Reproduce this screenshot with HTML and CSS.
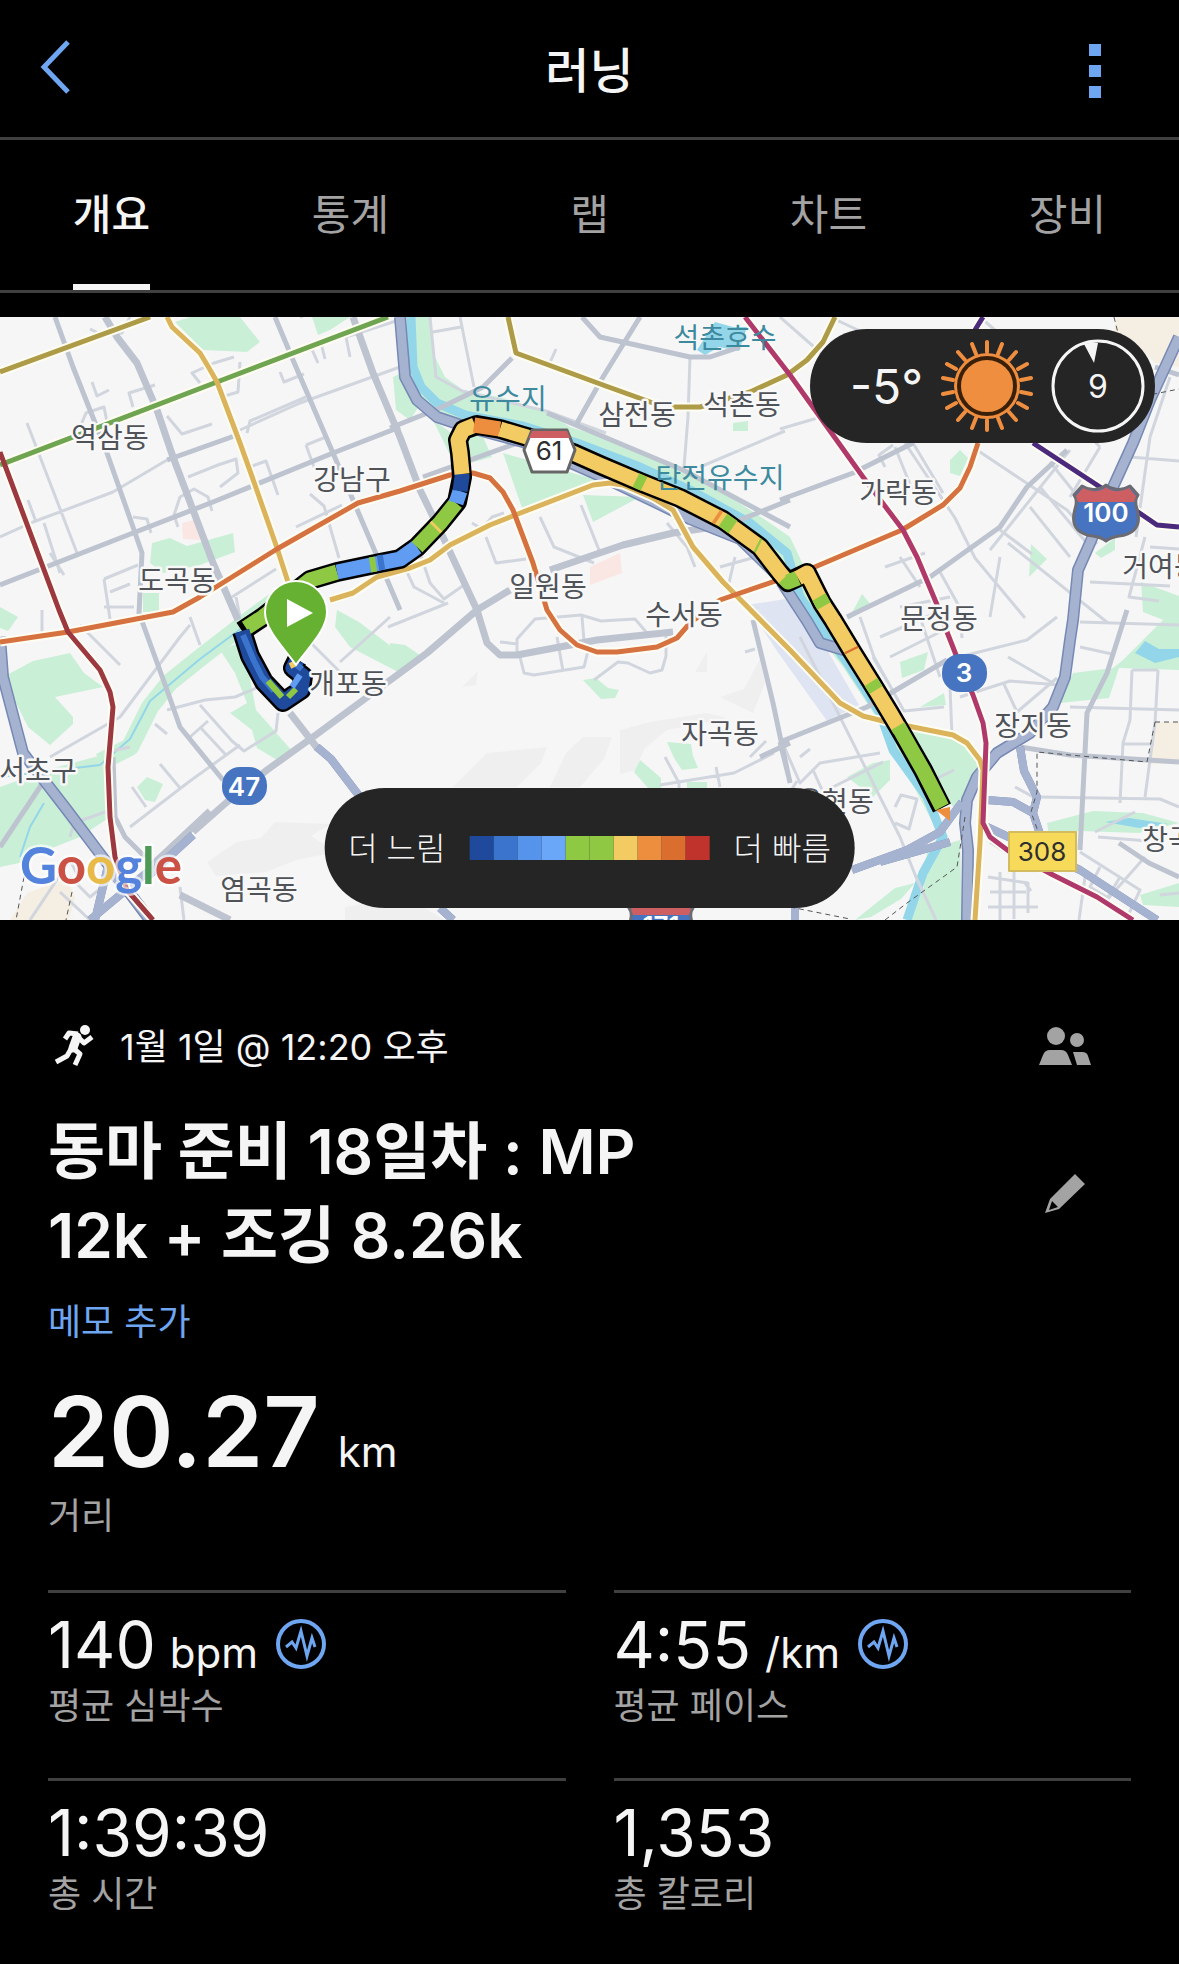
FILE: index.html
```html
<!DOCTYPE html>
<html lang="ko">
<head>
  <meta charset="utf-8">
  <meta name="viewport" content="width=device-width,initial-scale=1">
  <title>러닝</title>
  <link rel="stylesheet" href="styles.css">
</head>
<body>

<header class="topbar">
  <button class="icon-btn" type="button" aria-label="뒤로">
    <svg width="32" height="54" viewBox="0 0 32 54"><path class="chevron" d="M28 2 4 27l24 25"/></svg>
  </button>
  <div class="topbar-title">러닝</div>
  <button class="icon-btn more" type="button" aria-label="더 보기">
    <svg width="12" height="54" viewBox="0 0 12 54"><path d="M0 0h12v12H0zM0 21h12v12H0zM0 42h12v12H0z"/></svg>
  </button>
</header>

<nav class="tabs">
  <div class="tabs-row">
    <button class="tab active" type="button">개요</button>
    <button class="tab" type="button">통계</button>
    <button class="tab" type="button">랩</button>
    <button class="tab" type="button">차트</button>
    <button class="tab" type="button">장비</button>
  </div>
</nav>

<!-- ───────── Map ───────── -->
<section class="map">
  <svg class="map-canvas" viewBox="0 0 1179 603" role="img" aria-label="러닝 경로 지도">
    <rect class="land" width="1179" height="603"/>

    <!-- terrain shading -->
    <g class="terrain">
      <path d="M453 470 487 436l60-6-6 16-24 24zM550 470l16-34 17-16 29 0-8 22-24 28zM620 413l30-8 57-9 20 5-60 12-22 18-10 22-15 4zM720 380l24-8 16-30 5 24-12 30z"/>
      <path d="M207 545l30-20 24-4 14-16 56 2-20 12 25 16-40 8-30 12-50 4zM695 355l12-20v20zM345 590l60-10 40 23H345zM462 370l16-16-2 14z"/>
    </g>

    <!-- parks -->
    <g class="park">
      <path d="M175 5 190 0h50l20 25-13 10-44-2zM312 0h38l-20 13-12 5zM152 226l18-5 17 8 46-13 2 19-35 13-37 8-13-10zM143 276h16v19h-16z"/>
      <path d="M3 360l30-16 37-8 14 20 19 14-48 10 18 20v7l-23 21-22-18zM0 470l50-18 60-16v64l-30 20-38 15-18 10-24 5zM0 290l18 10-10 14-8-3z"/>
      <path d="M137 470l10-10 16 7-8 18-10-2zM230 396l17-10-12-30-15-23 16-6 14 34 6 32 16 18 21 24-16 8-20-12-5-18zM337 293l22 12 41 31v20l-50-26-15-20zM390 326l15 2 15 10-20 18-10-6z"/>
      <path d="M503 136l94 27-75 28zM583 178l57 2-47 25zM433 103l20 14 30 3 9 20-22 6-20-8zM393 60l20-10 10 33-13 20-14-10zM733 106l15-2v10h-15zM848 303l24-14-10-12zM950 143l10-10 8 8-8 18-10-3zM1031 227l16 15-18 18zM1095 236l20-15v12l-14 8zM1141 265l38 14v30l-36-14z"/>
      <path d="M583 363l13-2 12 10 11 2-4 8-14 1zM667 425l24 2 2 12 5 12-16 2-8-12zM634 455l6-12 21 18v10l-12 1zM687 465h20v6h-20z"/>
      <path d="M910 413l40 8 20 12 12 14-10 30-19 13-20-32zM847 460l26-14 17-3v20l-17 17zM927 533l33-10 2 80h-52l14-34zM900 345l28-10-4 18-22 8zM1060 386l13-30 40-5 10-8 50-50h6v60l-60-2-10 30z"/>
      <path d="M1047 506l46-12 50 2 36 10-40 10-60-2-30 4zM1140 578l39-12v24l-36-2zM855 603l40-32 20-5-14 16-30 18zM920 390l24-14 2 12z"/>
      <path d="M405 0h25l5 40 10 20 18 13 40 8 44 14 23 15 53 16 60 30 47 24 40 26 20 14 17 36 90 140 50 84-14 26-53-100-37-56-53-67-10-27-40-36-50-20-83-40-84-40-56-12-30-10-20-17-12-23z"/>
    </g>
    <path class="park-band" d="M100 445 130 430l20-40 20-25 30-24 45-35 30-22"/>
    <path class="campus" d="M182 206l12-3 6 20-17-1zM590 250l30-14 2 20-32 12zM943 183l14-16 3 10-13 13z"/>
    <path class="rail-yard" d="M747 288l38-6 30 30 44 76-32 16-50-70z"/>
    <path class="sand" d="M1117 0h62v50l-24-4-20-20-24-2zM1157 405h22v42h-31zM27 576l40-15 8 20-6 22H10z"/>
    <path class="lake" d="M697 33 715 5l18 5 14 0-8 24-20-4-14 8zM1135 336l10-12 14 8h20v8l-24 6zM1105 505l24-4 40 6-30 4z"/>

    <!-- Tancheon and streams -->
    <path class="river" d="M411 0l2 50 8 20 16 16 28 12 58 11 54 17 63 24 50 23 60 33 37 30 13 44 50 70 30 46 13 37 34 47 16 40-20 36-16 47"/>
    <path class="stream" d="M0 460l100-12 30-26 20-38 50-42 46-34M20 540l10-30 14-24"/>

    <!-- minor streets -->
    <g class="street">
      <path d="M27 106 77 236M33 205l80-30 54-32M0 220l33-15M240 113l60-27 100-36M247 116l3-12 56-24M92 65l5 14 12-6M90 12l12 6 20-2 8-16M133 90l-4-14 26-8M200 66l-8 -10 22-10 20 -6M167 99l15 18 30-10M240 45l-2 30-20 6M280 55l4 10 20-8M350 40l-4-20 50-16M310 28l8 18M320 22l5 20"/>
      <path d="M188 160l30-12 18-6 2 14-18 14M252 149l14-5 12 34M306 128l20-8M306 128l8 22M80 110l6-14 18-6 4 20M178 210l-4-12 6-18 14-8 14 8 4 14M133 200l14 2 4 14M104 262l34-14M104 262l6 40M110 275l20-8M104 290l30 0M50 236l14 22M296 210l46-22M310 177l14 12 15 52M28 183l8 22M44 206l16 50M232 280l44-28M240 300l-4-20"/>
      <path d="M50 440l70-40 60-80 10-12M167 393l38-10 30-3 40-17M200 388l32 36 12 10 32-20 2-18M190 420l18-16M200 410l26 28M130 510l60-46 50-36M132 470l14 20M160 447l20 24M155 407l12 10M42 293v30M190 300l10 28M310 325l30 30 20 14M340 345l50-45M80 308l40 40M300 0l100-40"/>
      <path d="M430 0l6 60 26 14 84 20 60 22M433 15l28-5M460 0l14 70M548 50l8-18M690 40l-2 60-4 50M700 150l85-36M540 200l14 30 40 16M581 188l20 50M534 245l8 16M472 206l10 6 10-12 12-4M486 220l10 26 30 -4M420 236l10 30 14 16 20-14M400 240l14 30 30 16M388 310l60-24"/>
      <path d="M517 338v-16l18-20 46-4 20 6 34-2 12 14 M500 325l18 2M557 320l6 34M582 300l2 24M520 340l4 16 10 2 50-8 4-16M594 363l24-18 10 1 22 10 12-3 4-14v-22M665 440l14 26v12M660 468l74-12 40-20M716 450l4 20M750 440l16-16 M667 206l20 24 8 20M720 250l50-14 8 24M735 240l-6 26M745 335l10-3"/>
      <path d="M780 0l50 44M830 0l30 14M885 150l-6-12 14-10M780 112l34-10 16-6M895 130l24 60M905 126l50 75 20 40 50 60M977 133l90 60 30 34M913 126l30 50M885 250l40-14 M900 240l20 30M980 0l16 14M940 255l20 36 2 30M1000 240l-10 60M1040 170l50 60M1030 190l40 50M1000 213l32 24M1050 145l24 30M1008 226l100 80M1070 133l-80 100"/>
      <path d="M1170 60l-20 60-14 100M1130 140l49 4M1060 90l40 40M1090 265l80 4M1080 305l99 3M1070 390l109 3M1040 480l120 2 19 8M1080 330l32 7M1150 230l29 2M1145 220l-16 60 30 4M1132 353l-2 50-7 23-3 60M1158 353l-3 53-10 74M1132 353h26M1124 427h30M1098 520l50 4M1095 515l40-20M1080 535l60 38-14 30M1100 550l-10 20 20 12M1120 560l-12 20M1145 540l-40 45M1160 578l19-2M1085 560l-6 43M990 525l30 20M988 560l40 6v30M990 575h36M988 590h50M1000 555v48M1014 552v50M1025 566l6 8"/>
      <path d="M860 300l14 40 30 54 40 -4M880 320l60-26M900 290l50-10M890 340l50-25M947 343l80-20 30-23M960 380l50-16 50 4M1003 365l14 30 40-34M1008 340l45 26M920 300l20 60M950 370l2 50M800 320l100 200 16 40 20 43M780 420l20 46 20-20 60-10M800 440l10-8M813 453l10 22 60-30M787 480l10-16M895 490l6-12 16 4-8 30-14-6M930 465l24-12M1015 470l22 12M873 340l14 24M1070 180l30-50"/>
      <path d="M30 603l40-60 10 20M70 560l20 20 20-16M60 575l30 28M180 570l4 33M130 430l-18 4M70 520l4-14 34-12"/>
    </g>

    <!-- main roads -->
    <g class="road">
      <path d="M55 0l18 50 34 86 26 74 9 26-3 60 28 77 13 37 43 53M0 268l133-52 80-31 120-49 67-26M275 0l18 43 40 93 20 47 27 63 20 47M640 0l-37 60-26 46M582 0l18 20 90 20 20 0 30-10M390 111l50-20 43-21 29-29M423 160l100-36M547 96l136 57 107 57M790 183l-60 24M167 143l73-26"/>
      <path d="M780 183l73-27 60-30M847 300l83-40 70-50 27-40 40-37M780 425l87-35 80-47M1127 293l-20 63-20 40-7 137M1020 430l50 8 109 7M753 303l20 83 17 80M760 440l30-14M780 425l10 40M0 530l40-60 6-14M0 320l4 12M1179 560l-30-14-30-20M113 440l2 60 10 20 20 20M388 0v-4M1155 50l24 8"/>
    </g>
    <g class="road wide">
      <path d="M105 0l12 20 20 26 20 47 16 47 20 53 20 53 25 57M353 0l20 56 27 64 20 53 23 47 34 73 10 33 13 12 17 0 80-15 76-8M193 515l34-30 40-32 46-33 87-64 27-20 50-43 33-20M550 253l73-25 50-12 40-6M150 550l60-56M180 578l50 25M290 396l28 36"/>
    </g>

    <!-- expressways, drawn as edge then fill -->
    <g class="hwy-edge">
      <path id="hwy-main" d="M1179 20l-29 63-17 43-20 44-23 56-12 27-5 50-3 20-5 37-12 30-23 26-33 20-20 24-10 23-2 23 3 27-1 70"/>
      <path id="hwy-west" d="M0 320l3 40 20 76 44 57 40 53 43 57"/>
      <path id="hwy-river" d="M400 0l5 60 12 23 20 17 30 10 56 15 84 37 83 40 50 20 37 36 30 46 13 22 27 8"/>
      <path id="hwy-ramps" d="M852 553l55-20 33-18 22-30M880 545l70-20M1020 430l4 24 13 26-4 16-20-11-26-2M1033 496l10 30M987 510l93 43 77 50M147 560l46-42M317 430l14 12 29 38M440 591l13 12M795 590v13M95 603l12-50 30 30M90 603l60-50"/>
    </g>
    <g class="hwy-fill">
      <use href="#hwy-main"/><use href="#hwy-west"/><use href="#hwy-river"/><use href="#hwy-ramps"/>
    </g>
    <path class="boundary" d="M1155 405h24M1155 405l-8 40-110-10v40l-6 20 8 22M965 500l-8 50-50 36-22 17M790 590l60 12M24 560l-8 43M72 575l-6 28M1114 0l10 40 25 38 30-6"/>

    <!-- subway lines -->
    <g class="rail-case">
      <path id="line-olive" d="M0 55 150 0M508 0l8 36 87 32 50 18 20 4h27l50-15 37-17 20-15 16-18 12-25"/>
      <path id="line-green" d="M0 148 217 65 388 0"/>
      <path id="line-gold" d="M167 0l5 10 28 26 9 15 8 14 23 61 15 42 22 63 11 34M330 283l23-7 24-16 33-9 20-8 20-15 40-20 33-13 70-27 17-2 13 2 30 13 20 12 20 37 30 35 67 68 50 53 23 13 24 6 26 5 40 8 14 8 13 17 3 10-3 73-5 77"/>
      <path id="line-orange" d="M0 325l68-10 105-20 27-15 77-48 81-46 42-12 50-16 23-2 17 5 13 14 10 18 20 53 14 47 13 20 17 15 20 7h20l40-5 20-9 13-15 30-23 90-31 92-39 41-25 17-17 10-21 8-24"/>
      <path id="line-red" d="M0 135l59 158 9 22 32 38 10 22 3 15-5 60 2 50 5 40 12 33 26 30"/>
      <path id="line-magenta" d="M745 0l45 58 73 102 40 53 14 27 21 50 9 25 13 33 13 30 10 28 3 20-3 80 7 14 20 15 43 23 44 22 36 23"/>
      <path id="line-purple" d="M983 0l-8 13M1033 126l67 44 38 25 19 13 22 2"/>
    </g>
    <use class="rail olive" href="#line-olive"/>
    <use class="rail green" href="#line-green"/>
    <use class="rail gold" href="#line-gold"/>
    <use class="rail orange" href="#line-orange"/>
    <use class="rail red" href="#line-red"/>
    <use class="rail magenta" href="#line-magenta"/>
    <use class="rail purple" href="#line-purple"/>

    <!-- route: outline, then pace-coloured pieces -->
    <path class="route-edge" d="M242 314l21-14 47-37 27-8 43-9 20-4 17-12 23-24 17-21 5-25-2-24-2-13 5-10 14-5 23 4 27 8 46 16 27 12 40 17 40 16 43 22 37 27 20 26 8 9 19-9 15 30 11 17 20 33 20 32 17 28 10 17 23 40 19 38"/>
    <path class="route-edge" d="M242 314l8 25 14 26 19 20 18-12 2-14-10-8 4-8"/>
    <g class="route">
      <path class="p-green" d="M246 311l17-11 47-37 27-8"/>
      <path class="p-sky" d="M337 255l43-9 20-4 17-12"/>
      <path class="p-green" d="M370 248l6-1"/>
      <path class="p-blue" d="M378 246l6-1"/>
      <path class="p-green" d="M417 230l23-24 16-20"/>
      <path class="p-yellow" d="M435 211l2-2"/>
      <path class="p-sky" d="M456 186l4-12"/>
      <path class="p-navy" d="M460 174l2-14v-3"/>
      <path class="p-yellow" d="M462 157l-2-21-2-13 5-10 12-5"/>
      <path class="p-orange" d="M474 108l26 4"/>
      <path class="p-yellow" d="M500 112l27 8 46 16 27 12 40 17 40 16 43 22 37 27 20 26 5 6"/>
      <path class="p-green" d="M636 163l8 4M723 203l10 7M757 228l2 1"/>
      <path class="p-orange" d="M716 199l3 2"/>
      <path class="p-green" d="M784 261l4 4 10-4"/>
      <path class="p-yellow" d="M798 261l9-5 15 30 11 17 20 33 20 32 17 28 10 17"/>
      <path class="p-green" d="M819 280l5 9M871 365l5 8M898 409l25 44 19 37"/>
      <path class="p-rust" d="M851 332l1 2"/>
      <path class="p-navy" d="M242 314l8 25 14 26 19 20 18-12 2-14-10-8 4-8"/>
      <path class="p-blue thin" d="M243 318l11 26 8 16 12 14M294 346l8 6"/>
      <path class="p-green thin" d="M268 364l14 16M288 380l8-8"/>
      <path class="p-sky thin" d="M292 370l8-12"/>
      <path class="p-yellow thin" d="M290 349l6-3"/>
    </g>
    <path class="route-end" d="M936 493l14-3v14z"/>

    <!-- water names -->
    <g class="name water">
      <text x="725" y="31">석촌호수</text>
      <text x="508" y="92">유수지</text>
      <text x="720" y="171">탄전유수지</text>
    </g>

    <!-- start pin -->
    <g class="pin">
      <path d="M296 348C286 333 265 314 265 295a31 31 0 0 1 62 0C327 314 306 333 296 348z"/>
      <path class="play" d="M287 282v28l26-14z"/>
    </g>

    <!-- district names -->
    <g class="name">
      <text x="110" y="131">역삼동</text>
      <text x="352" y="173">강남구</text>
      <text x="177" y="274">도곡동</text>
      <text x="548" y="280">일원동</text>
      <text x="684" y="308">수서동</text>
      <text x="637" y="108">삼전동</text>
      <text x="742" y="98">석촌동</text>
      <text x="898" y="186">가락동</text>
      <text x="939" y="312">문정동</text>
      <text x="1161" y="260">거여동</text>
      <text x="348" y="377">개포동</text>
      <text x="38" y="464">서초구</text>
      <text x="259" y="583">염곡동</text>
      <text x="720" y="427">자곡동</text>
      <text x="1033" y="419">장지동</text>
      <text x="835" y="495">율현동</text>
      <text x="1181" y="533">창곡동</text>
    </g>

    <!-- road shields -->
    <g class="shield">
      <path class="hex" d="M532 113h35l8 20-8 22h-35l-8-22z"/>
      <path class="crown" d="M532 114h35l3 7h-41z"/>
      <text class="dark" x="549" y="143">61</text>
      <g id="interstate">
        <path class="interstate" d="M1082 169q8 5 15 3 6-1 9-4 3 3 9 4 7 2 15-3l8 9q-4 5-1 14 4 14-3 21-5 5-15 6-8 1-13 5-5-4-13-5-10-1-15-6-7-7-3-21 3-9-1-14z"/>
        <path class="crown" d="M1083 171q7 4 14 3 6-1 9-4 3 3 9 4 7 1 14-3l7 8-2 6h-56l-2-6z"/>
      </g>
      <text x="1106" y="205">100</text>
      <use href="#interstate" x="-445" y="413"/>
      <text x="661" y="618">171</text>
      <rect class="national" x="942" y="337" width="45" height="38" rx="18"/>
      <text x="964" y="365">3</text>
      <rect class="national" x="222" y="450" width="45" height="38" rx="18"/>
      <text x="244" y="479">47</text>
      <rect class="local" x="1009" y="515" width="67" height="39"/>
      <text class="dark" x="1042" y="544">308</text>
    </g>

    <text class="google" x="20" y="567"><tspan class="g-blue">G</tspan><tspan class="g-red">o</tspan><tspan class="g-yellow">o</tspan><tspan class="g-blue">g</tspan><tspan class="g-green">l</tspan><tspan class="g-red">e</tspan></text>
  </svg>

  <div class="pill weather">
    <span class="temp">-5°</span>
    <svg class="sun" width="92" height="92" viewBox="-46 -46 92 92">
      <circle r="33"/>
      <circle class="gap" r="28"/>
      <path class="rays" d="M0-44v10M0 44V34M15-42l-4 10M-15-42l4 10M15 42 11 32M-15 42l4-10M29-34l-7 8M-29-34l7 8M29 34l-7-8M-29 34l7-8M40-22l-9 5M-40-22l9 5M40 22l-9-5M-40 22l9-5M44-8l-10 2M-44-8l10 2M44 8 34 6M-44 8l10-2"/>
    </svg>
    <div class="wind">
      <svg width="94" height="94" viewBox="-47 -47 94 94">
        <circle r="45"/>
        <path d="M-14-42A45 45 0 0 1 0-43L-4-23z"/>
      </svg>
      <span class="wind-speed">9</span>
    </div>
  </div>

  <div class="pill legend">
    <span>더 느림</span>
    <div class="scale">
      <i class="s1"></i><i class="s2"></i><i class="s3"></i><i class="s4"></i><i class="s5"></i><i class="s5"></i><i class="s6"></i><i class="s7"></i><i class="s8"></i><i class="s9"></i>
    </div>
    <span>더 빠름</span>
  </div>
</section>

<!-- ───────── Activity summary ───────── -->
<main class="activity">
  <div class="row">
    <div class="when">
      <svg class="runner" width="40" height="42" viewBox="0 0 40 42">
        <circle cx="31" cy="5" r="5"/>
        <path class="torso" d="M23 12 19 23"/>
        <path class="limb" d="M24 9 15 8l-4 6M25 13l5 5 8-6M19 23l7 6-5 11M17 24l-4 7-11 6"/>
      </svg>
      <span>1월 1일 @ 12:20 오후</span>
    </div>
    <button class="side-btn" type="button" aria-label="공개 범위">
      <svg width="52" height="40" viewBox="0 0 52 40">
        <circle cx="17" cy="10" r="9"/><circle cx="38" cy="14" r="7"/>
        <path d="M0 39 4 29q2-5 7-5h11q5 0 7 5l4 10zM34 26h9q5 0 6 4l3 9H38z"/>
      </svg>
    </button>
  </div>

  <div class="row title-row">
    <h1>동마 준비 18일차 : MP<br>12k + 조깅 8.26k</h1>
    <button class="side-btn" type="button" aria-label="이름 편집">
      <svg width="40" height="40" viewBox="0 0 40 40">
        <path fill-rule="evenodd" d="M30 0l10 10-26 25L0 39 5 25zM7 27 4 36l9-3z"/>
      </svg>
    </button>
  </div>

  <a class="memo" href="#memo">메모 추가</a>

  <dl class="distance">
    <dd>20.27 <small>km</small></dd>
    <dt>거리</dt>
  </dl>

  <dl class="stats">
    <div class="stat">
      <dd>140 <small>bpm</small>
        <svg class="pulse" width="50" height="50" viewBox="0 0 50 50"><circle cx="25" cy="25" r="23"/><path d="M10 28l6-5 4 6 5-17 6 25 5-18 3 9"/></svg>
      </dd>
      <dt>평균 심박수</dt>
    </div>
    <div class="stat">
      <dd>4:55 <small>/km</small>
        <svg class="pulse" width="50" height="50" viewBox="0 0 50 50"><circle cx="25" cy="25" r="23"/><path d="M10 28l6-5 4 6 5-17 6 25 5-18 3 9"/></svg>
      </dd>
      <dt>평균 페이스</dt>
    </div>
    <div class="stat">
      <dd>1:39:39</dd>
      <dt>총 시간</dt>
    </div>
    <div class="stat">
      <dd>1,353</dd>
      <dt>총 칼로리</dt>
    </div>
  </dl>
</main>

</body>
</html>
```
FILE: styles.css
```css
:root {
  --line: #404040;
  --text: #f5f5f5;
  --muted: #a3a3a3;
  --accent: #6fa6f2;
  font-family: Inter, "Noto Sans CJK KR", sans-serif;
}
* {box-sizing: border-box;}
body   {margin:0;background:#000;color:var(--text);overflow-x:hidden}
button {padding:0;border:0;background:none;color:inherit;font:inherit}
svg    {display:block}

/* top bar */
.topbar {display:flex;justify-content:space-between;align-items:center;
         height:140px;padding:0 40px;border-bottom:3px solid var(--line)}
.topbar-title {padding-bottom:4px;font-size:48px;font-weight:500}
.icon-btn {display:flex;width:100px;padding-bottom:4px}
.icon-btn.more {justify-content:flex-end;padding:4px 38px 0 0}
.icon-btn svg {fill:var(--accent)}
.icon-btn .chevron {fill:none;stroke:var(--accent);stroke-width:5}

/* tabs */
.tabs {border-bottom:3px solid var(--line);overflow:hidden}
.tabs-row {display:grid;grid-template-columns:repeat(5, 1fr);margin:0 -8px}
.tab {justify-self:center;height:150px;padding-bottom:2px;
      border-bottom:6px solid transparent;color:var(--muted);font-size:42px}
.tab.active {border-bottom-color:var(--text);color:var(--text);font-weight:500}

/* map */
.map {position:relative;margin-top:24px;overflow:hidden}
.map-canvas {width:100%;height:auto;fill:none;stroke-linejoin:round}
.land      {fill:#f6f6f7}
.terrain   {fill:#efeff0}
.park      {fill:#caefd7}
.park-band {stroke:#caefd7;stroke-width:18}
.campus    {fill:#fae6e3}
.rail-yard {fill:#dfe4f2}
.sand      {fill:#f5eee2}
.lake      {fill:#93d6e9}
.river     {stroke:#93d6e9;stroke-width:9}
.stream    {stroke:#93d6e9;stroke-width:2}
.street    {stroke:#d1d5dd;stroke-width:3}
.road      {stroke:#bdc3cf;stroke-width:5}
.road.wide {stroke-width:7}
.hwy-edge  {stroke:#7688b3;stroke-width:12}
.hwy-fill  {stroke:#a5b3d1;stroke-width:9}
#hwy-ramps {stroke-width:8}
.boundary  {stroke:#555;stroke-width:1;stroke-dasharray:5 4}
.rail-case {stroke:#fffdf2;stroke-width:9}
.rail      {stroke-width:5}
.olive     {stroke:#ae9b48}
.green     {stroke:#6fa551}
.gold      {stroke:#dab35a}
.orange    {stroke:#d5723f}
.red       {stroke:#9c3840}
.magenta   {stroke:#b0396c}
.purple    {stroke:#4b2a7d}

.route-edge {stroke:#000;stroke-width:20}
.route      {stroke-width:15}
.route .thin {stroke-width:6}
.p-navy   {stroke:#1f4a9c}
.p-blue   {stroke:#3a74cc}
.p-sky    {stroke:#5f9cf2}
.p-green  {stroke:#8fc843}
.p-yellow {stroke:#f2cb62}
.p-orange {stroke:#ec8e3e}
.p-rust   {stroke:#d96e2e}
.route-end {fill:#ec8e3e}
.pin  {fill:#66b132;stroke:#fff;stroke-width:2}
.play {fill:#fff;stroke:none}

.name {fill:#4f5358;stroke:#f8f8f8;stroke-width:5;paint-order:stroke;
       font-size:28px;text-anchor:middle}
.name.water {fill:#3d8a9e;stroke:none}
.shield {fill:#fff;font-size:26px;font-weight:600;text-anchor:middle}
.shield .dark {fill:#2e2e2e;font-weight:400}
.hex        {stroke:#666;stroke-width:3}
.crown      {fill:#cd5f63}
.interstate {fill:#4674c1;stroke:#6b6b73;stroke-width:3}
.national   {fill:#4674c1}
.local      {fill:#f8da5b;stroke:#d3bb5f;stroke-width:2}
.google {font-family:Lato, sans-serif;font-size:51px;font-weight:700;
         stroke:#ffffffaa;stroke-width:5;paint-order:stroke}
.g-blue   {fill:#5383dd}
.g-red    {fill:#cb5145}
.g-yellow {fill:#e8bb48}
.g-green  {fill:#4d9a57}

/* map overlays */
.pill {position:absolute;display:flex;align-items:center;
       border-radius:60px;background:#252525}
.weather {top:12px;right:24px;height:114px;padding:0 10px 0 40px;gap:18px}
.temp {font-size:48px}
.sun  {fill:#ef8e3f}
.sun .gap  {stroke:#3a2008;stroke-width:4}
.sun .rays {stroke:#ef8e3f;stroke-width:4;stroke-linecap:round}
.wind {display:grid;place-items:center}
.wind > * {grid-area:1 / 1}
.wind circle {fill:none;stroke:var(--text);stroke-width:3}
.wind path   {fill:var(--text)}
.wind-speed  {font-size:32px}
.legend {bottom:12px;left:50%;transform:translateX(-50%);
         height:120px;padding:0 24px;gap:24px;font-size:32px;font-weight:300;
         white-space:nowrap}
.legend span {padding-bottom:4px}
.scale {display:grid;grid-template-columns:repeat(10, 24px);height:24px}
.s1 {background:#1f4a9c}
.s2 {background:#3a74cc}
.s3 {background:#5694ec}
.s4 {background:#6aa7f8}
.s5 {background:#8fc843}
.s6 {background:#f2cb62}
.s7 {background:#ec8e3e}
.s8 {background:#d96e2e}
.s9 {background:#c0322c}

/* activity summary */
.activity {padding:96px 48px 48px}
.row  {display:flex;justify-content:space-between;align-items:center}
.when {display:flex;align-items:center;gap:26px;height:60px;
       padding-left:6px;font-size:36px}
.when span {padding-bottom:4px}
.runner {fill:var(--text)}
.torso, .limb {fill:none;stroke:var(--text);stroke-linejoin:round}
.torso {stroke-width:9;stroke-linecap:round}
.limb  {stroke-width:5}
.side-btn {display:grid;place-items:center;width:132px}
.side-btn svg {fill:var(--muted)}
.title-row {margin-top:34px}
h1 {margin:0;font-size:62px;font-weight:600;line-height:84px}
.memo {display:block;width:fit-content;margin-top:20px;color:var(--accent);
       font-size:36px;line-height:48px;text-decoration:none}

dl, dd {margin:0}
dt    {color:var(--muted);font-size:36px;line-height:48px}
dd    {display:flex;align-items:baseline;gap:14px}
small {font-size:42px;font-weight:400}
.distance {margin-top:36px}
.distance dd {height:110px;gap:18px;font-size:98px;font-weight:600;line-height:100px}
.stats {display:grid;grid-template-columns:1fr 1fr;column-gap:48px;margin-top:50px}
.stat  {padding:16px 0 48px;border-top:3px solid var(--line)}
.stat dd {height:73px;font-size:64px;line-height:72px}
.pulse {align-self:center;margin:0 0 4px 4px;fill:none;stroke:var(--accent);stroke-width:4}
.pulse path {stroke-width:3}
```
